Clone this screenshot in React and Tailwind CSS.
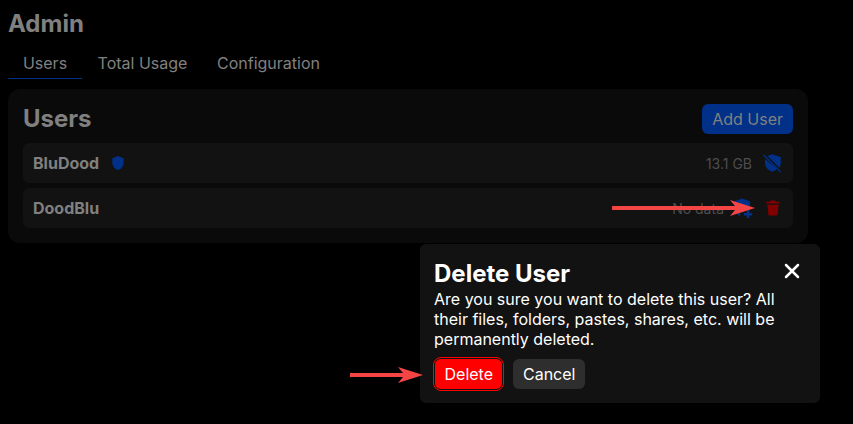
import { X } from "lucide-react";

function ShieldFill({ className }) {
  return (
    <svg viewBox="0 0 24 24" className={className} fill="currentColor">
      <path d="M12 1.500 3.500 4.700v6.500c0 5.200 3.600 9.900 8.500 11.300 4.900-1.400 8.500-6.100 8.500-11.300V4.700L12 1.500Z" />
    </svg>
  );
}

function ShieldOff({ className }) {
  return (
    <svg viewBox="0 0 24 24" className={className} fill="currentColor">
      <path d="M12 1.500 6.600 3.500 21 17.900c.9-1.900 1.500-4.300 1.500-6.700V4.700L12 1.500Z" />
      <path d="M3.500 7.200v4c0 5.200 3.600 9.900 8.500 11.300 2.200-.6 4.300-2 5.800-3.700L3.500 7.200Z" />
      <path d="M2.200 1.400 23 22.200l-1.200 1.200L1 2.600Z" />
    </svg>
  );
}

function ShieldPlus({ className }) {
  return (
    <svg viewBox="0 0 24 24" className={className} fill="currentColor">
      <path d="M11 .5 1.500 4v7.200c0 4.400 2.800 8.600 7 10.600V17h3.600v-3.600h7.200c.8-1.600 1.200-3.300 1.200-5V4L11 .5Z" />
      <path d="M16.500 14.500h3v3.500H23v3h-3.500v3h-3v-3H13v-3h3.500Z" />
    </svg>
  );
}

function Trash({ className }) {
  return (
    <svg viewBox="0 0 24 24" className={className} fill="currentColor">
      <path d="M9 2h6l1 1.500h5V6H3V3.500h5L9 2Z" />
      <path d="M4.500 7.500h15l-1.200 13c-.1 1-.9 1.500-1.800 1.500h-9c-.9 0-1.700-.5-1.800-1.500l-1.200-13Z" />
    </svg>
  );
}

function LongArrow({ className }) {
  return (
    <svg viewBox="0 0 143 18" className={className} fill="#f44444">
      <path d="M0 7h123L118 1l25 8-25 8 5-6H0Z" />
    </svg>
  );
}

function ShortArrow({ className }) {
  return (
    <svg viewBox="0 0 73 18" className={className} fill="#f44444">
      <path d="M0 7h53L48 1l25 8-25 8 5-6H0Z" />
    </svg>
  );
}

function UserRow({ name, usage, usageGap, children }) {
  return (
    <div className="h-10 rounded-md bg-[#121212] flex items-center justify-between pl-[10px] pr-[11px]">
      <div className="flex items-center gap-[11px]">
        <span className="text-[16px] font-bold text-[#808080]">{name}</span>
        {usage === "13.1 GB" && <ShieldFill className="w-[16px] h-[16px] text-[#003087]" />}
      </div>
      <div className="flex items-center">
        <span className={usageGap}>{usage}</span>
        {children}
      </div>
    </div>
  );
}

export default function App() {
  return (
    <div className="relative w-[853px] h-[424px] overflow-hidden bg-black font-['Inter',sans-serif]">
      <div className="px-2 pt-[8px]">
        <h1 className="text-[24px] leading-[32px] font-bold text-[#808080]">Admin</h1>

        <div className="flex mt-[7px] h-[32px] text-[16px] text-[#808080]">
          <div className="w-[74px] text-center border-b border-[#003087] pt-[4px]">Users</div>
          <div className="w-[121px] text-center pt-[4px]">Total Usage</div>
          <div className="w-[135px] text-center pt-[4px] -ml-[2px]">Configuration</div>
        </div>

        <div className="w-[800px] h-[154px] mt-[10px] rounded-xl bg-[#0a0a0a] px-[15px] pt-[15px]">
          <div className="flex items-center justify-between h-[30px]">
            <h2 className="text-[24px] font-bold text-[#808080]">Users</h2>
            <button className="h-[30px] px-[10px] rounded-md bg-[#003087] text-[16px] text-[#808080]">Add User</button>
          </div>
          <div className="mt-[9px] flex flex-col gap-[5px]">
            <UserRow name="BluDood" usage="13.1 GB" usageGap="text-[14px] text-[#4d4d4d] mr-[10px]">
              <ShieldOff className="w-[20px] h-[20px] text-[#003087]" />
            </UserRow>
            <UserRow name="DoodBlu" usage="No data" usageGap="text-[14px] text-[#4d4d4d] mr-[9px]">
              <ShieldPlus className="w-[20px] h-[20px] text-[#003087]" />
              <Trash className="w-[18px] h-[18px] ml-[11px] text-[#800000]" />
            </UserRow>
          </div>
        </div>
      </div>

      <div className="absolute left-[420px] top-[244px] w-[400px] h-[159px] rounded-md bg-[#121212] text-white px-[14px] pt-[15px]">
        <button className="absolute right-[16px] top-[15px]">
          <X className="w-[24px] h-[24px]" strokeWidth={2.5} />
        </button>
        <h3 className="text-[24px] leading-[30px] font-bold">Delete User</h3>
        <p className="text-[16px] leading-[20px]">
          Are you sure you want to delete this user? All their files, folders, pastes, shares, etc. will be permanently deleted.
        </p>
        <div className="flex gap-[11px] mt-[10px] ml-[1px]">
          <button className="h-[30px] px-[9.5px] rounded-md bg-[#ff0000] text-[16px] outline outline-1 outline-offset-1 outline-[#ff0000]">Delete</button>
          <button className="h-[30px] px-[9.5px] rounded-md bg-[#2e2e2e] text-[16px]">Cancel</button>
        </div>
      </div>

      <LongArrow className="absolute left-[612px] top-[199px] w-[143px] h-[18px]" />
      <ShortArrow className="absolute left-[350px] top-[366px] w-[73px] h-[18px]" />
    </div>
  );
}
